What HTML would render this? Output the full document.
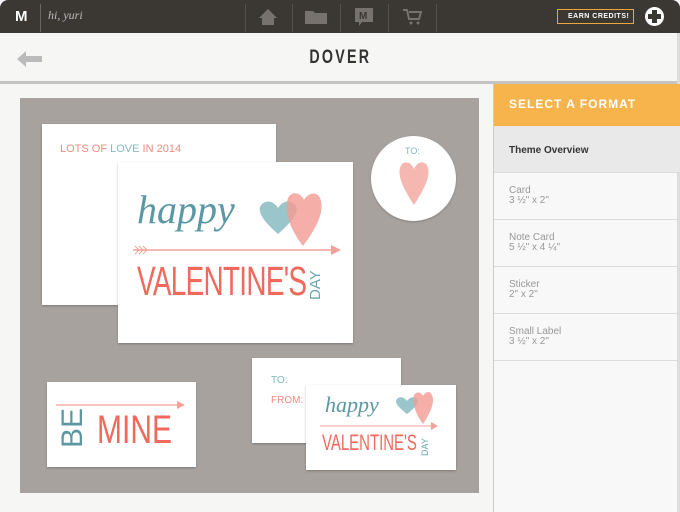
<!DOCTYPE html>
<html><head><meta charset="utf-8"><style>
*{margin:0;padding:0;box-sizing:border-box}
body{width:680px;height:512px;overflow:hidden;background:#fff;font-family:"Liberation Sans",sans-serif;position:relative}
.abs{position:absolute}
.top{left:0;top:0;width:680px;height:33px;background:#3b3733;border-radius:8px 8px 0 0}
.hdr{left:0;top:33px;width:680px;height:49px;background:#f6f6f5}
.card{position:absolute;background:#fff;box-shadow:0 1px 2px rgba(0,0,0,.25)}
.cond{font-family:"Liberation Sans Narrow","Liberation Sans",sans-serif}
.side div{position:absolute;left:0;width:187px;border-bottom:1px solid #dcdcdc;padding-left:15px;font-size:10px;color:#999;line-height:10px}
</style></head><body>
<div class="abs top"></div>
<div class="abs" style="left:15px;top:8px;color:#fff;font-weight:bold;font-size:15px">M</div>
<div class="abs" style="left:40px;top:4px;width:1px;height:28px;background:#6b6661"></div>
<div class="abs" style="left:48px;top:8px;color:#bbb;font-style:italic;font-family:'Liberation Serif',serif;font-size:12px">hi, yuri</div>
<div class="abs" style="left:245px;top:4px;width:1px;height:28px;background:#55504b"></div>
<div class="abs" style="left:292px;top:4px;width:1px;height:28px;background:#55504b"></div>
<div class="abs" style="left:340px;top:4px;width:1px;height:28px;background:#55504b"></div>
<div class="abs" style="left:388px;top:4px;width:1px;height:28px;background:#55504b"></div>
<div class="abs" style="left:436px;top:4px;width:1px;height:28px;background:#55504b"></div>
<svg class="abs" style="left:258px;top:8px" width="20" height="18"><path d="M10 1L1 10h3v7h12v-7h3z" fill="#77726d"/></svg>
<svg class="abs" style="left:305px;top:10px" width="22" height="14"><path d="M0 1h8l2 2h12v11H0z" fill="#77726d"/></svg>
<svg class="abs" style="left:354px;top:7px" width="20" height="20"><path d="M1 1h18v14H8l-3 4v-4H1z" fill="#77726d"/><text x="5" y="12" font-size="10" font-weight="bold" fill="#3b3733">M</text></svg>
<svg class="abs" style="left:403px;top:9px" width="20" height="16"><path d="M0 1h4l2 9h10l2-7H6" fill="none" stroke="#77726d" stroke-width="2"/><circle cx="8" cy="14" r="1.5" fill="#77726d"/><circle cx="15" cy="14" r="1.5" fill="#77726d"/></svg>
<div class="abs cond" style="left:557px;top:9px;width:77px;height:15px;border:1px solid #f0a53a;color:#fff;font-size:7px;font-weight:bold;line-height:13px;padding-left:10px;letter-spacing:.5px">EARN CREDITS!</div>
<div class="abs" style="left:645px;top:7px;width:19px;height:19px;border-radius:50%;background:#fff"></div>
<div class="abs" style="left:652px;top:10px;width:5px;height:13px;background:#3b3733"></div>
<div class="abs" style="left:648px;top:14px;width:13px;height:5px;background:#3b3733"></div>
<div class="abs hdr"></div>
<svg class="abs" style="left:17px;top:50px" width="26" height="18"><path d="M0 9L9 1v5h16v6H9v5z" fill="#bbb"/></svg>
<div class="abs" style="left:0;top:47px;width:680px;text-align:center"><span class="cond" style="display:inline-block;font-size:19px;font-weight:bold;letter-spacing:3px;color:#333;transform:scaleX(.75)">DOVER</span></div>
<div class="abs" style="left:0;top:81px;width:680px;height:3px;background:#c4c4c4"></div>
<div class="abs" style="left:0;top:84px;width:493px;height:428px;background:#f6f6f5"></div>
<div class="abs" style="left:493px;top:84px;width:187px;height:428px;background:#f8f8f8;border-left:1px solid #ccc"></div>
<div class="abs" style="left:677px;top:33px;width:3px;height:479px;background:#ddd"></div>
<div class="abs side" style="left:494px;top:84px">
<div style="top:0;height:42px;background:#f8b44c;color:#fff;font-weight:bold;font-size:12px;padding-top:15px;letter-spacing:1px;border:0" class="cond">SELECT A FORMAT</div>
<div style="top:42px;height:47px;background:#e9e9e9;color:#333;font-weight:bold;padding-top:20px">Theme Overview</div>
<div style="top:89px;height:47px;padding-top:13px">Card<br>3 ½" x 2"</div>
<div style="top:136px;height:47px;padding-top:13px">Note Card<br>5 ½" x 4 ¼"</div>
<div style="top:183px;height:47px;padding-top:13px">Sticker<br>2" x 2"</div>
<div style="top:230px;height:47px;padding-top:13px">Small Label<br>3 ½" x 2"</div>
</div>
<div class="abs" style="left:20px;top:98px;width:459px;height:395px;background:#a8a29e"></div>
<div class="card" style="left:42px;top:124px;width:234px;height:181px"></div>
<div class="abs cond" style="left:60px;top:143px;font-size:11px;color:#ef8a7e">LOTS OF <span style="color:#8bb8c0">LOVE</span> IN 2014</div>
<div class="card" style="left:118px;top:162px;width:235px;height:181px"></div>
<div class="abs" style="left:137px;top:186px;font-family:'Liberation Serif',serif;font-style:italic;font-size:40px;color:#5c98a3">happy</div>
<svg class="abs" style="left:256px;top:190px" width="75" height="60"><path d="M22 44C6 30 0 20 6 14c6-5 12-2 16 4 4-6 10-9 16-4 7 6 0 16-16 30z" fill="#7fb6be" opacity=".8"/><path d="M47 56C33 38 28 20 32 8c4-8 13-5 16 2 3-6 12-10 16-2 5 12-2 28-17 48z" fill="#f29b92" opacity=".8"/></svg>
<svg class="abs" style="left:133px;top:244px" width="210" height="12"><path d="M0 6h200" stroke="#f3a198" stroke-width="1.5"/><path d="M198 1l10 5-10 5z" fill="#f3a198"/><path d="M2 2l4 4-4 4M6 2l4 4-4 4M10 2l4 4-4 4" stroke="#f3a198" fill="none"/></svg>
<div class="abs cond" style="left:137px;top:258px;font-size:41px;color:#ef6a5c;transform:scaleX(.68);transform-origin:0 0;letter-spacing:-1px">VALENTINE'S</div>
<div class="abs cond" style="left:307px;top:300px;font-size:15px;color:#6aa6ae;transform:rotate(-90deg);transform-origin:0 0">DAY</div>
<div class="abs" style="left:371px;top:136px;width:85px;height:85px;border-radius:50%;background:#fff;box-shadow:0 1px 2px rgba(0,0,0,.2)"></div>
<div class="abs cond" style="left:405px;top:146px;font-size:9px;color:#7fb6be">TO:</div>
<svg class="abs" style="left:396px;top:160px" width="36" height="46"><path d="M18 45C5 25 0 12 6 4c5-4 10 0 12 5 2-5 7-9 12-5 6 8 1 21-12 41z" fill="#f6b7b0"/></svg>
<div class="card" style="left:47px;top:382px;width:149px;height:85px"></div>
<svg class="abs" style="left:56px;top:400px" width="130" height="10"><path d="M0 5h122" stroke="#f3a198" stroke-width="1.2"/><path d="M121 1l8 4-8 4z" fill="#f3a198"/></svg>
<div class="abs cond" style="left:97px;top:408px;font-size:40px;color:#ef6a5c;transform:scaleX(.75);transform-origin:0 0">MINE</div>
<div class="abs cond" style="left:56px;top:448px;font-size:30px;color:#5c98a3;transform:rotate(-90deg);transform-origin:0 0">BE</div>
<div class="card" style="left:252px;top:358px;width:149px;height:85px"></div>
<div class="abs cond" style="left:271px;top:375px;font-size:10px;color:#7fb6be">TO:</div>
<div class="abs cond" style="left:271px;top:395px;font-size:10px;color:#ef8a7e">FROM:</div>
<div class="card" style="left:306px;top:385px;width:150px;height:85px"></div>
<div class="abs" style="left:325px;top:392px;font-family:'Liberation Serif',serif;font-style:italic;font-size:22px;color:#5c98a3">happy</div>
<svg class="abs" style="left:394px;top:390px" width="44" height="36"><path d="M13 24C4 17 0 12 3 9c3-3 7-2 10 2 3-4 7-5 10-2 3 3-1 8-10 15z" fill="#7fb6be" opacity=".8"/><path d="M29 34C21 23 18 12 20 5c3-4 7-3 9 1 2-4 7-6 9-1 3 7-1 17-9 29z" fill="#f29b92" opacity=".8"/></svg>
<svg class="abs" style="left:320px;top:422px" width="120" height="8"><path d="M0 4h112" stroke="#f3a198"/><path d="M111 0l7 4-7 4z" fill="#f3a198"/></svg>
<div class="abs cond" style="left:322px;top:430px;font-size:22px;color:#ef6a5c;transform:scaleX(.68);transform-origin:0 0">VALENTINE'S</div>
<div class="abs cond" style="left:420px;top:456px;font-size:9px;color:#6aa6ae;transform:rotate(-90deg);transform-origin:0 0">DAY</div>
</body></html>
